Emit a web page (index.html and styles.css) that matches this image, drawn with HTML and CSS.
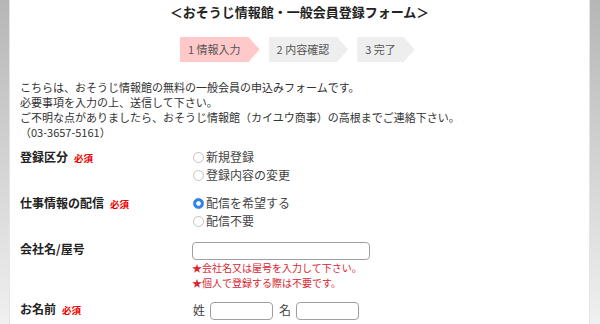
FILE: index.html
```html
<!DOCTYPE html>
<html lang="ja">
<head>
    <meta charset="UTF-8">
    <meta name="viewport" content="width=device-width, initial-scale=1.0">
    <title>一般会員登録フォーム</title>
    <link rel="stylesheet" href="styles.css">
</head>
<body>
    <div class="container">
        <h1 class="title">＜おそうじ情報館・一般会員登録フォーム＞</h1>

        <ol class="steps">
            <li class="step current">1 情報入力</li>
            <li class="step">2 内容確認</li>
            <li class="step">3 完了</li>
        </ol>

        <div class="intro">
            <p>こちらは、おそうじ情報館の無料の一般会員の申込みフォームです。</p>
            <p>必要事項を入力の上、送信して下さい。</p>
            <p>ご不明な点がありましたら、おそうじ情報館（カイユウ商事）の高根までご連絡下さい。</p>
            <p>（03-3657-5161）</p>
        </div>

        <form class="form">
            <div class="row">
                <div class="label">登録区分<span class="req">必須</span></div>
                <div class="field">
                    <label class="radio"><input type="radio" name="kind">新規登録</label>
                    <label class="radio"><input type="radio" name="kind">登録内容の変更</label>
                </div>
            </div>

            <div class="row">
                <div class="label">仕事情報の配信<span class="req">必須</span></div>
                <div class="field">
                    <label class="radio"><input type="radio" name="mail" checked>配信を希望する</label>
                    <label class="radio"><input type="radio" name="mail">配信不要</label>
                </div>
            </div>

            <div class="row">
                <div class="label">会社名/屋号</div>
                <div class="field">
                    <input type="text" class="text-input company">
                    <p class="note">★会社名又は屋号を入力して下さい。</p>
                    <p class="note">★個人で登録する際は不要です。</p>
                </div>
            </div>

            <div class="row">
                <div class="label">お名前<span class="req">必須</span></div>
                <div class="field name-field">
                    <span>姓</span><input type="text" class="text-input name">
                    <span class="mei">名</span><input type="text" class="text-input name">
                </div>
            </div>
        </form>
    </div>
</body>
</html>
```

FILE: styles.css
```css
* {
    margin: 0;
    padding: 0;
    box-sizing: border-box;
}

body {
    font-family: "Noto Sans CJK JP", "Noto Sans", sans-serif;
    background: linear-gradient(180deg, #b6b6b6 0%, #f0f0f0 100%);
    min-height: 100vh;
    color: #333;
}

.container {
    margin: 0 10px 0 9px;
    min-height: 100vh;
    background: #fff;
    border-left: 1px solid #e4e4e4;
    border-right: 1px solid #e4e4e4;
    padding: 0 10px;
}

.title {
    font-size: 13px;
    font-weight: 700;
    line-height: 18px;
    padding-top: 3px;
    text-align: center;
    color: #222;
}

.steps {
    list-style: none;
    display: flex;
    gap: 9px;
    margin: 16px 0 0 160px;
}

.step {
    height: 25px;
    line-height: 25px;
    padding: 0 19px 0 8px;
    font-size: 11px;
    color: #555;
    background: #eeeeee;
    clip-path: polygon(0 0, calc(100% - 11px) 0, 100% 50%, calc(100% - 11px) 100%, 0 100%);
}

.step.current {
    background: #ffc9c9;
}

.intro {
    margin-top: 18px;
    font-size: 11px;
    line-height: 15px;
    color: #333;
}

.form {
    margin-top: 8px;
}

.row {
    display: grid;
    grid-template-columns: 172px 1fr;
    margin-bottom: 10px;
    line-height: 18px;
}

.label {
    font-size: 12px;
    font-weight: 700;
    color: #222;
}

.req {
    margin-left: 6px;
    font-size: 9.5px;
    color: #e00;
}

.field {
    font-size: 12px;
    color: #444;
}

.radio {
    display: flex;
    align-items: center;
    height: 18px;
}

.radio input {
    appearance: none;
    -webkit-appearance: none;
    width: 11px;
    height: 11px;
    margin: 0 2px 0 1px;
    border: 1px solid #c4c4c4;
    border-radius: 50%;
    background: #fff;
}

.radio input:checked {
    border-color: #2f83f0;
    background: radial-gradient(circle, #fff 0 2px, #2f83f0 2.5px);
}

.text-input {
    height: 18px;
    border: 1px solid #a0a0a0;
    border-radius: 4px;
    background: #fff;
    outline: none;
}

.company {
    display: block;
    width: 178px;
    margin: 2px 0 1px;
}

.note {
    font-size: 10px;
    line-height: 14.5px;
    color: #d8262f;
}

.name-field {
    display: flex;
    align-items: center;
    padding-left: 1px;
}

.name-field span {
    margin-right: 5px;
}

.name-field .mei {
    margin-left: 6px;
}

.name {
    width: 63px;
    margin-top: 2px;
}
```
